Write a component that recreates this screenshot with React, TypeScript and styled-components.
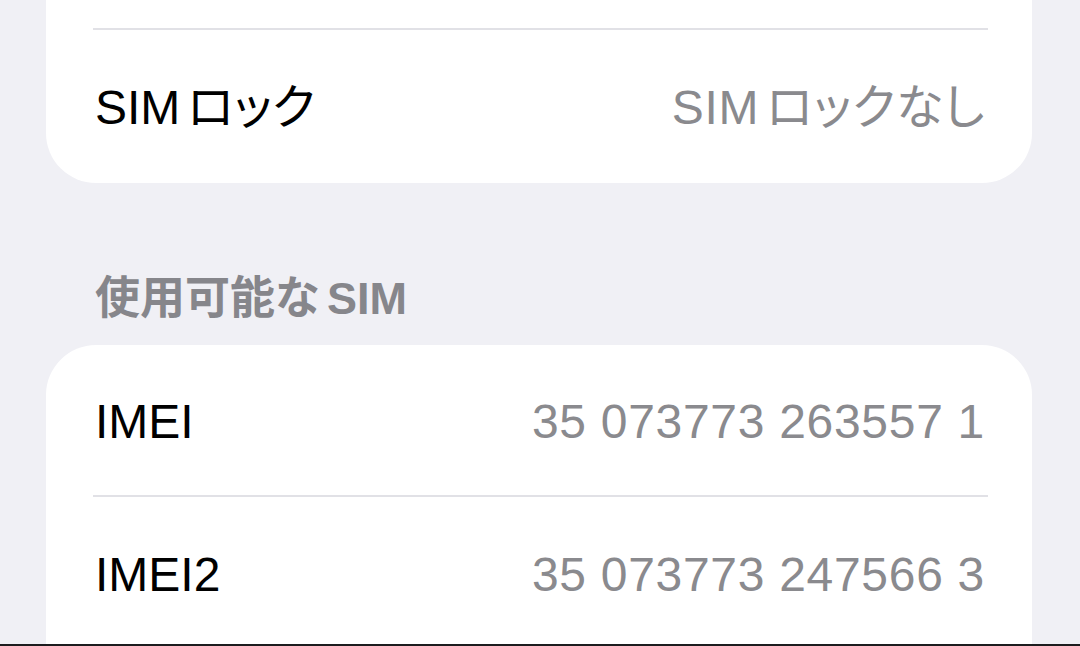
import React from 'react'
import styled, { createGlobalStyle } from 'styled-components'

const GlobalStyle = createGlobalStyle`
  html, body {
    margin: 0;
    padding: 0;
    background: #f0f0f5;
  }
  body {
    font-family: "Liberation Sans", "Noto Sans CJK JP", sans-serif;
    font-feature-settings: "palt";
    -webkit-font-smoothing: antialiased;
  }
`

const Page = styled.div`
  display: flex;
  flex-direction: column;
  height: 646px;
  overflow: hidden;
  background: #f0f0f5;
`

const Content = styled.div`
  flex: 1;
  display: flex;
  flex-direction: column;
  padding: 0 48px 0 46px;
  min-height: 0;
`

const Card = styled.div<{ $openTop?: boolean; $openBottom?: boolean }>`
  background: #ffffff;
  border-radius: ${({ $openTop, $openBottom }) =>
    `${$openTop ? 0 : 50}px ${$openTop ? 0 : 50}px ${$openBottom ? 0 : 50}px ${$openBottom ? 0 : 50}px`};
  overflow: hidden;
  flex-shrink: 0;
  ${({ $openBottom }) => ($openBottom ? 'flex: 1;' : '')}
`

const Stub = styled.div`
  height: 28px;
`

const Row = styled.div<{ $divider?: boolean; $height?: number }>`
  position: relative;
  display: flex;
  align-items: center;
  justify-content: space-between;
  box-sizing: border-box;
  height: ${({ $height }) => $height ?? 150}px;
  padding: 4px 47px 0 49px;
  font-size: 48px;
  line-height: 1;

  &::before {
    content: '';
    display: ${({ $divider }) => ($divider ? 'block' : 'none')};
    position: absolute;
    top: 0;
    left: 47px;
    right: 44px;
    height: 2px;
    background: #e1e1e6;
  }
`

const Label = styled.span`
  color: #000000;
`

const Value = styled.span`
  color: #8a8a8e;
  letter-spacing: 0.7px;
`

// latin run next to kana gets a little air, as iOS does
const Latin = styled.span<{ $lead?: boolean }>`
  margin: ${({ $lead }) => ($lead ? '0 0 0 8px' : '0 7px 0 0')};
`

const SectionHeader = styled.div`
  padding: 91px 49px 22px;
  font-size: 45px;
  line-height: 49px;
  font-weight: bold;
  color: #86868b;
`

const BottomEdge = styled.div`
  height: 2px;
  background: #1c1c1e;
  flex-shrink: 0;
`

const rows = [
  { label: 'IMEI', value: '35 073773 263557 1' },
  { label: 'IMEI2', value: '35 073773 247566 3', height: 155 },
]

export default function App() {
  return (
    <Page>
      <GlobalStyle />
      <Content>
        <Card $openTop>
          <Stub />
          <Row $divider $height={155}>
            <Label>
              <Latin>SIM</Latin>ロック
            </Label>
            <Value>
              <Latin>SIM</Latin>ロックなし
            </Value>
          </Row>
        </Card>
        <SectionHeader>
          使用可能な<Latin $lead>SIM</Latin>
        </SectionHeader>
        <Card $openBottom>
          {rows.map((row, i) => (
            <Row key={row.label} $divider={i > 0} $height={row.height}>
              <Label>{row.label}</Label>
              <Value>{row.value}</Value>
            </Row>
          ))}
        </Card>
      </Content>
      <BottomEdge />
    </Page>
  )
}
